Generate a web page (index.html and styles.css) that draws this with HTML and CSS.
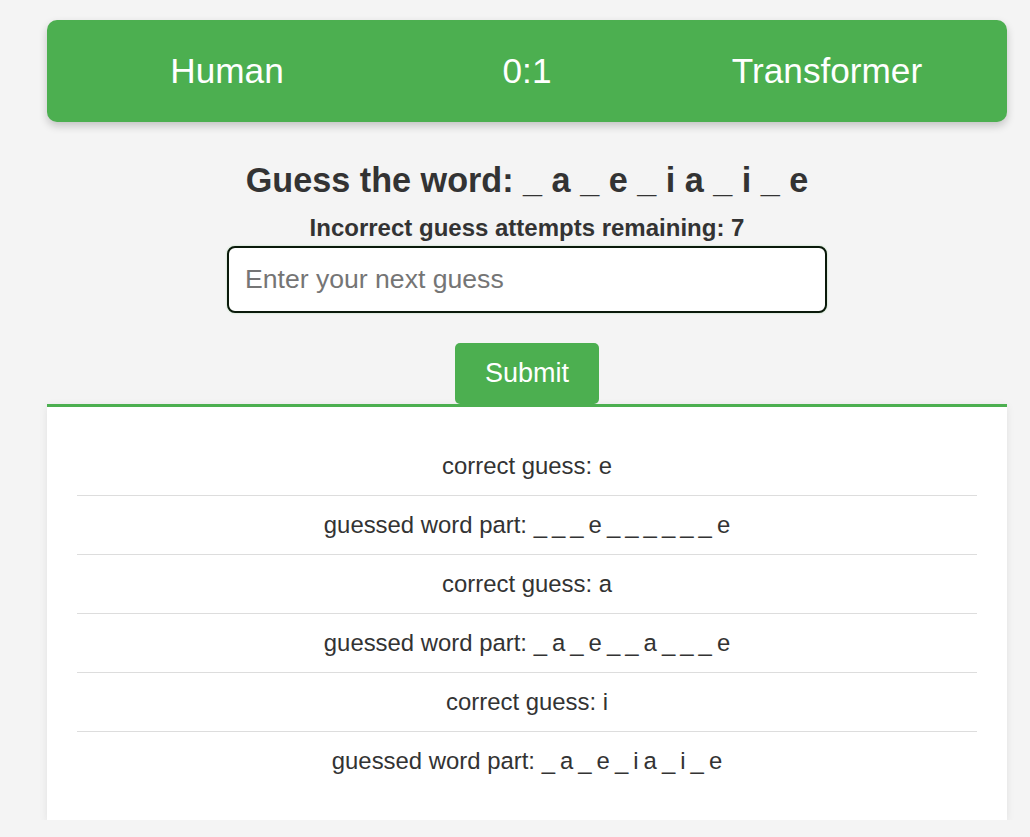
FILE: index.html
```html
<!DOCTYPE html>
<html>
<head>
<meta charset="utf-8">
<link rel="stylesheet" href="styles.css">
</head>
<body>
<div class="page">
  <header class="scoreboard">
    <div class="player">Human</div>
    <div class="player">0:1</div>
    <div class="player">Transformer</div>
  </header>
  <section class="game">
    <h1 class="word">Guess the word: _ a _ e _ i a _ i _ e</h1>
    <p class="attempts">Incorrect guess attempts remaining: 7</p>
    <input class="guess" type="text" placeholder="Enter your next guess" autofocus>
    <button class="submit">Submit</button>
  </section>
  <section class="log">
    <div class="entry">correct guess: e</div>
    <div class="entry">guessed word part: <span class="pattern">_ _ _ e _ _ _ _ _ _ e</span></div>
    <div class="entry">correct guess: a</div>
    <div class="entry">guessed word part: <span class="pattern">_ a _ e _ _ a _ _ _ e</span></div>
    <div class="entry">correct guess: i</div>
    <div class="entry">guessed word part: <span class="pattern">_ a _ e _ i a _ i _ e</span></div>
  </section>
</div>
</body>
</html>
```

FILE: styles.css
```css
html, body {
  margin: 0;
  padding: 0;
  background: #f4f4f4;
  font-family: "Liberation Sans", Arial, sans-serif;
  color: #333;
}
.page {
  width: 960px;
  margin: 20px 0 0 47px;
}
.scoreboard {
  background: #4caf50;
  border-radius: 10px;
  box-shadow: 0 4px 8px rgba(0,0,0,0.2);
  height: 102px;
  padding: 0 30px;
  box-sizing: border-box;
  display: flex;
  align-items: center;
}
.player {
  flex: 1;
  text-align: center;
  color: #fff;
  font-size: 35.2px;
}
.game {
  display: flex;
  flex-direction: column;
  align-items: center;
}
.word {
  margin: 38px 0 0;
  font-size: 34.2px;
  line-height: 40px;
  font-weight: bold;
}
.attempts {
  margin: 14px 0 0;
  font-size: 24px;
  line-height: 28px;
  font-weight: bold;
}
.guess {
  margin-top: 4px;
  width: 600px;
  height: 67px;
  box-sizing: border-box;
  border: 2px solid #0b1a0b;
  border-radius: 8px;
  padding: 0 16px;
  font-family: "Liberation Sans", Arial, sans-serif;
  font-size: 26.6px;
  color: #333;
  background: #fff;
  outline: none;
  box-shadow: 0 0 2px rgba(76,175,80,0.4);
}
.guess::placeholder {
  color: #757575;
}
.submit {
  margin-top: 30px;
  width: 144px;
  height: 61px;
  border: none;
  border-radius: 5px;
  background: #4caf50;
  color: #fff;
  font-family: "Liberation Sans", Arial, sans-serif;
  font-size: 27px;
  padding: 0;
}
.log {
  background: #fff;
  border-top: 3px solid #4caf50;
  box-shadow: 0 2px 8px rgba(0,0,0,0.08);
  padding: 30px;
  height: 416px;
  box-sizing: border-box;
}
.entry {
  text-align: center;
  font-size: 23.9px;
  line-height: 28px;
  padding: 15px 0;
  border-bottom: 1px solid #ddd;
}
.entry:last-child {
  border-bottom: none;
}
.pattern {
  word-spacing: -1.6px;
}
```
